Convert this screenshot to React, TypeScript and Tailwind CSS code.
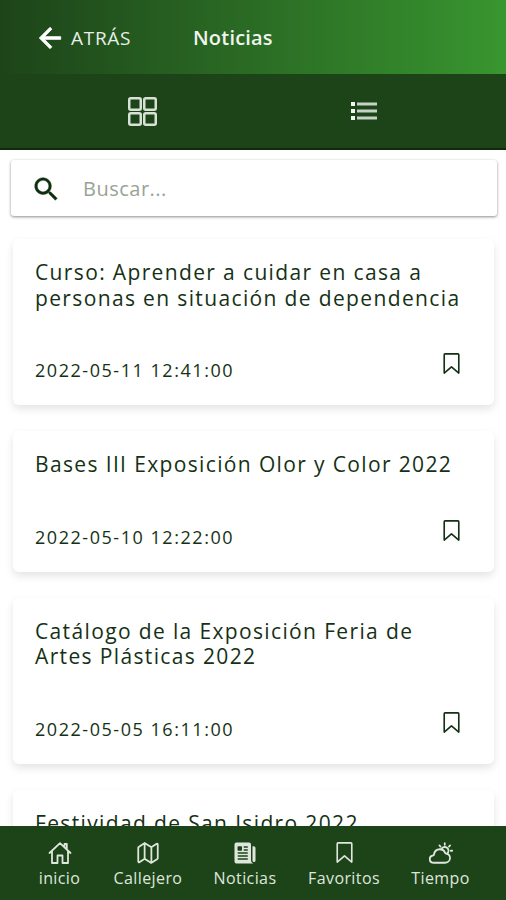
import React from 'react';
import { IoMdArrowBack, IoMdSearch } from 'react-icons/io';
import { IoMapOutline, IoNewspaper, IoPartlySunnyOutline } from 'react-icons/io5';

interface NewsItem {
  id: number;
  title: string;
  date: string;
}

interface TabItem {
  label: string;
  icon: React.ComponentType<{ className?: string }>;
  className: string;
  iconClassName: string;
}

const news: NewsItem[] = [
  { id: 1, title: 'Curso: Aprender a cuidar en casa a personas en situación de dependencia', date: '2022-05-11 12:41:00' },
  { id: 2, title: 'Bases III Exposición Olor y Color 2022', date: '2022-05-10 12:22:00' },
  { id: 3, title: 'Catálogo de la Exposición Feria de Artes Plásticas 2022', date: '2022-05-05 16:11:00' },
  { id: 4, title: 'Festividad de San Isidro 2022', date: '2022-05-04 10:05:00' },
];

const GridIcon: React.FC = () => (
  <svg className="size-[29px]" viewBox="0 0 29 29" fill="none" stroke="#d8e1d6" strokeWidth="2.5">
    <rect x="1.25" y="1.25" width="11.5" height="11.5" rx="1.5" />
    <rect x="16.25" y="1.25" width="11.5" height="11.5" rx="1.5" />
    <rect x="1.25" y="16.25" width="11.5" height="11.5" rx="1.5" />
    <rect x="16.25" y="16.25" width="11.5" height="11.5" rx="1.5" />
  </svg>
);

const ListIcon: React.FC = () => (
  <svg className="h-[18px] w-[26px]" viewBox="0 0 26 18" fill="#c6d2c4">
    <path d="M0 0h4v4H0zM0 7h4v4H0zM0 14h4v4H0z" fill="#f2f6f1" />
    <path d="M6 .5h20v3H6zM6 7.5h20v3H6zM6 14.5h20v3H6z" />
  </svg>
);

const HomeIcon: React.FC<{ className?: string }> = ({ className }) => (
  <svg className={className} viewBox="0 0 24 24" fill="none" stroke="currentColor" strokeWidth="1.8" strokeLinecap="round" strokeLinejoin="round">
    <path d="M1.5 12 12 2.2 22.5 12M18.8 8.3V3h-2.3v3.1M4 10v12h5.5v-7.5h5V22H20V10" />
  </svg>
);

const BookmarkIcon: React.FC<{ className?: string }> = ({ className }) => (
  <svg className={className} viewBox="0 0 24 24" fill="none" stroke="currentColor" strokeWidth="1.7" strokeLinejoin="round">
    <path d="M5.2 2h13.6q.8 0 .8.8V22L12 15.6 4.4 22V2.8q0-.8.8-.8z" />
  </svg>
);

const tabs: TabItem[] = [
  { label: 'inicio', icon: HomeIcon, className: 'w-[77px]', iconClassName: 'size-[24px]' },
  { label: 'Callejero', icon: IoMapOutline, className: 'w-[100px]', iconClassName: 'size-[24px] [&_path]:stroke-[38]' },
  { label: 'Noticias', icon: IoNewspaper, className: 'w-[94px]', iconClassName: 'size-[24px]' },
  { label: 'Favoritos', icon: BookmarkIcon, className: 'w-[104px]', iconClassName: 'size-[23px] mb-px' },
  { label: 'Tiempo', icon: IoPartlySunnyOutline, className: 'w-[89px]', iconClassName: 'size-[24px] [&_path]:stroke-[38]' },
];

const NewsCard: React.FC<{ item: NewsItem }> = ({ item }) => (
  <article className="shrink-0 rounded-md bg-white px-[22px] pt-[21px] pb-[20px] shadow-[0_4px_8px_rgba(0,0,0,0.11)]">
    <h2 className="text-[21px] leading-[25.5px] tracking-[1.36px]">{item.title}</h2>
    <div className="mt-[42px] flex h-[32px] items-start justify-between">
      <time className="mt-[4px] text-[18px] leading-[27px] tracking-[1.54px]">{item.date}</time>
      <button className="mt-[-1px] mr-[9px]" aria-label="Guardar">
        <BookmarkIcon className="size-[23px]" />
      </button>
    </div>
  </article>
);

export default function App() {
  return (
    <div className="flex h-[900px] w-[506px] flex-col overflow-hidden bg-white font-['Open_Sans','Noto_Sans',sans-serif] text-[#153115]">
      <header className="flex h-[74px] shrink-0 items-center bg-linear-to-r from-[#1d4419] to-[#38962f] pt-[2px] pl-[34px] text-white">
        <button className="flex w-[159px] items-center gap-[5px]">
          <IoMdArrowBack className="size-[32px] stroke-current stroke-[14]" />
          <span className="text-[19px] tracking-[0.7px] text-[#e8efe6]">ATRÁS</span>
        </button>
        <h1 className="text-[20px] font-semibold tracking-[0.2px] text-[#f0f5ef]">Noticias</h1>
      </header>

      <div className="grid h-[76px] shrink-0 grid-cols-2 border-b-2 border-[#16270f] bg-[#1d4419]">
        <button className="flex items-center justify-center pl-[32px]" aria-label="Cuadrícula">
          <GridIcon />
        </button>
        <button className="flex items-center justify-center pr-[31px]" aria-label="Lista">
          <ListIcon />
        </button>
      </div>

      <label className="mr-[9px] ml-[11px] mt-[10px] flex h-[56px] shrink-0 items-center rounded-[3px] bg-white pt-[2px] pl-[20px] shadow-[0_1px_3px_rgba(0,0,0,0.45)]">
        <IoMdSearch className="size-[30px] stroke-current stroke-[8] text-[#0d2f0d]" />
        <input
          className="ml-[22px] w-[300px] text-[20px] tracking-[0.5px] outline-none placeholder:text-[#98a396]"
          placeholder="Buscar..."
        />
      </label>

      <main className="flex min-h-0 flex-1 flex-col gap-[26px] overflow-hidden pt-[23px] pr-[12px] pl-[13px]">
        {news.map((item) => (
          <NewsCard key={item.id} item={item} />
        ))}
      </main>

      <nav className="flex h-[74px] shrink-0 bg-[#1d4419] pl-[21px] text-[#dfe7dd]">
        {tabs.map(({ label, icon: Icon, className, iconClassName }) => (
          <button key={label} className={`flex flex-col items-center pt-[15px] ${className}`}>
            <Icon className={iconClassName} />
            <span className="mt-px text-[16px] leading-[25px] tracking-[0.4px]">{label}</span>
          </button>
        ))}
      </nav>
    </div>
  );
}
